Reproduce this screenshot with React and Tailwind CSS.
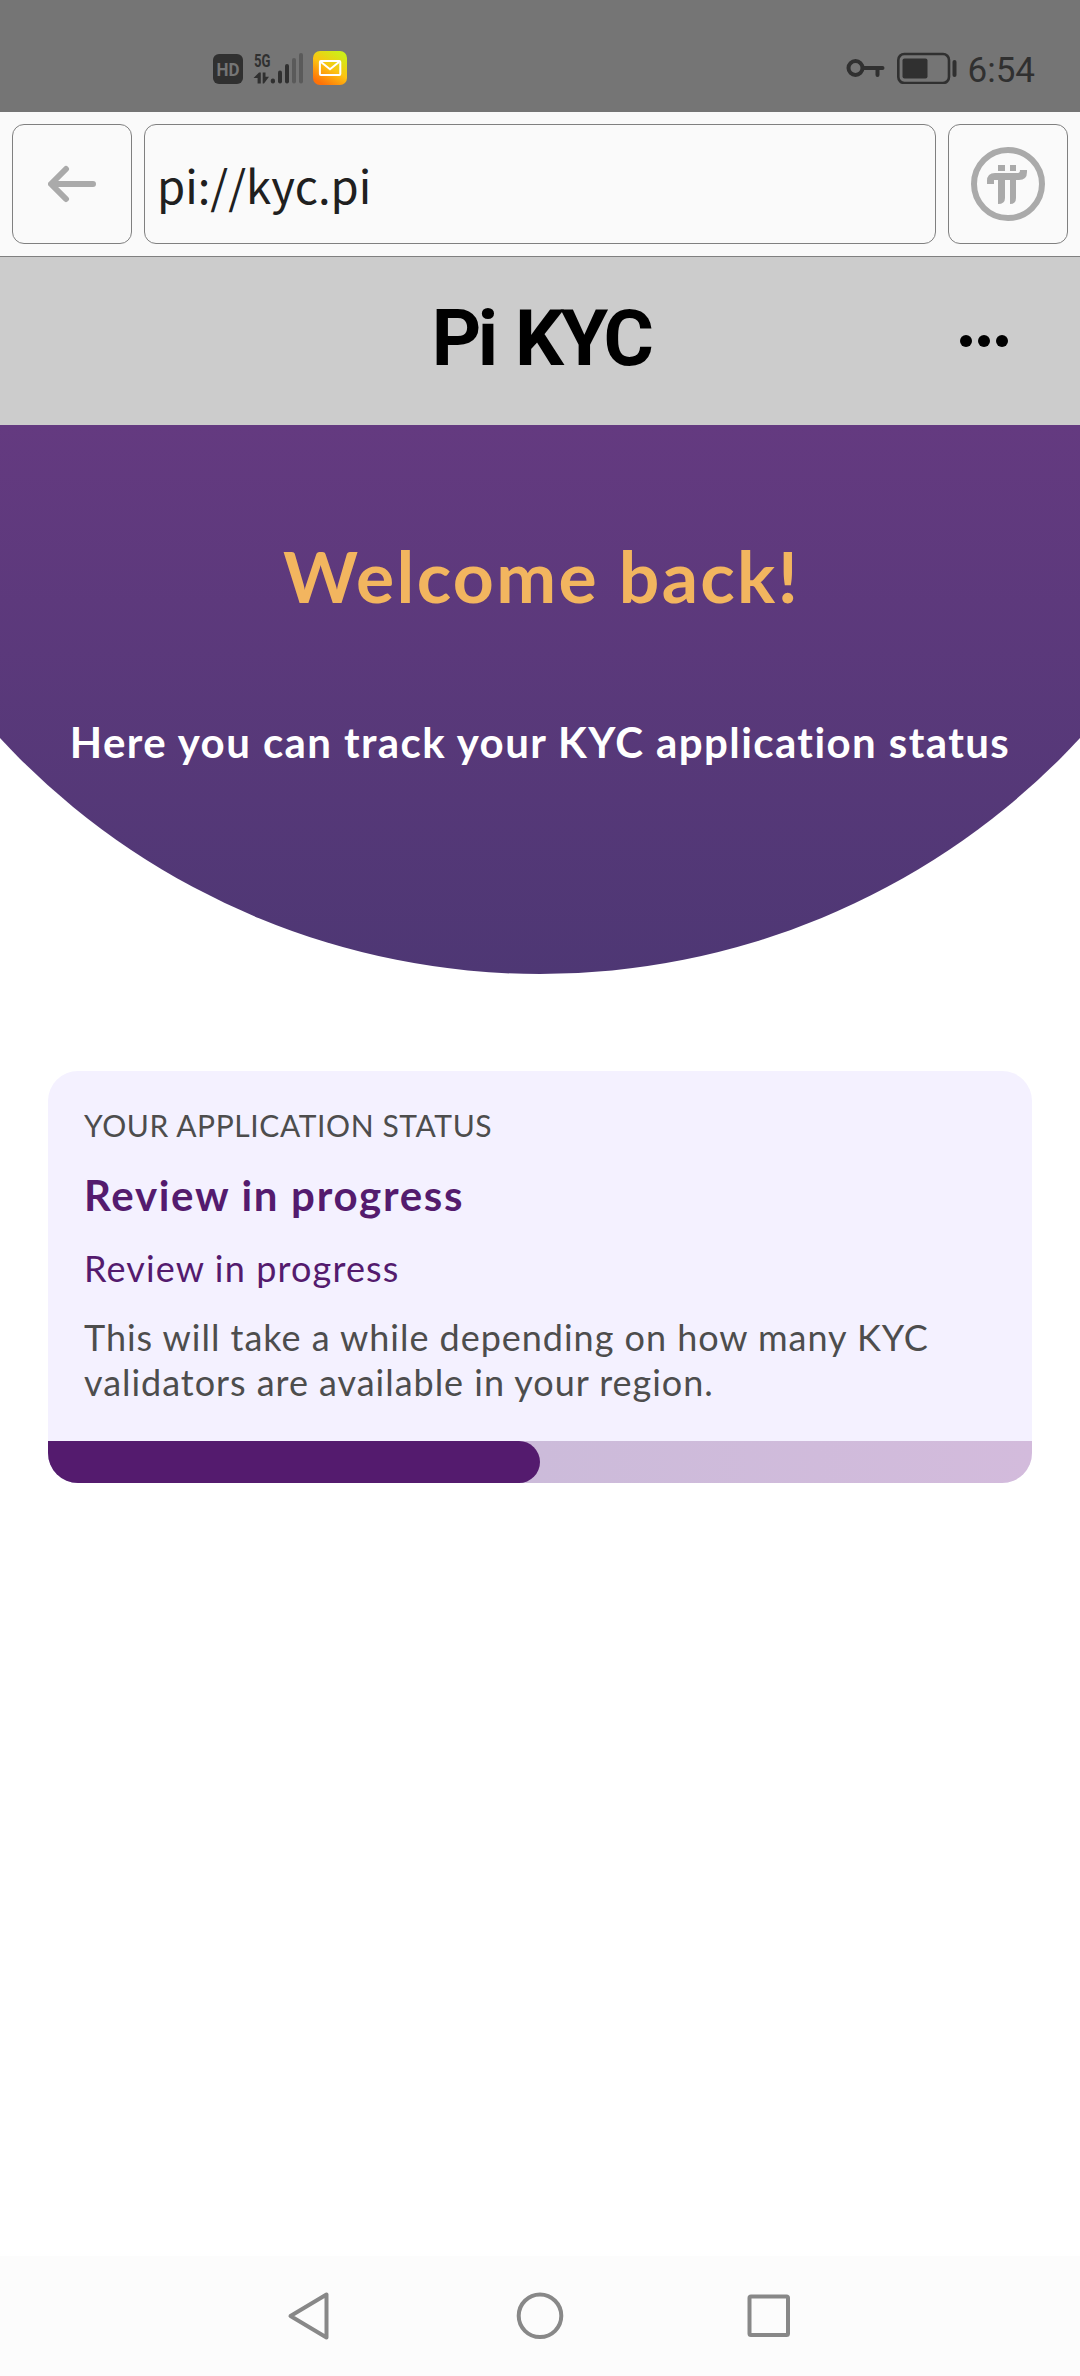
function SignalCluster() {
  return (
    <svg className="h-9 w-[134px]" viewBox="213 50 134 36" fill="#303030">
      <defs>
        <linearGradient id="mail" x1="0.2" y1="1" x2="0.8" y2="0">
          <stop offset="0.05" stopColor="#ff7208" />
          <stop offset="0.5" stopColor="#fcc312" />
          <stop offset="0.95" stopColor="#cdee18" />
        </linearGradient>
      </defs>
      <rect x="213" y="54" width="30" height="30" rx="6" />
      <text x="216.5" y="76" fontFamily="Roboto, sans-serif" fontSize="18.5" fontWeight="700" textLength="23" lengthAdjust="spacingAndGlyphs" fill="#757575">HD</text>
      <text x="254" y="66.5" fontFamily="Roboto, sans-serif" fontSize="19" fontWeight="700" textLength="16.5" lengthAdjust="spacingAndGlyphs">5G</text>
      <path d="M253.5 78 L259 72.5 H260.8 V83.5 H257.6 V78 Z" />
      <path d="M262.7 72.5 H265.5 V76.8 H269 L264 83.5 H262.7 Z" />
      <rect x="270.8" y="78.5" width="4.2" height="5" rx="2" />
      <rect x="278" y="70.5" width="4" height="13" rx="2" />
      <rect x="285" y="64" width="4" height="19.5" rx="2" />
      <rect x="292" y="58" width="4" height="25.5" rx="2" fill="#5a5a5a" />
      <rect x="299" y="53" width="4" height="30.5" rx="2" fill="#5a5a5a" />
      <rect x="313" y="51" width="34" height="34" rx="7" fill="url(#mail)" />
      <rect x="319.9" y="60.9" width="20.4" height="14.2" rx="1" fill="none" stroke="#fff" strokeWidth="2" />
      <path d="M321 62 L330 69.2 L339 62" fill="none" stroke="#fff" strokeWidth="2" />
    </svg>
  );
}

function KeyIcon() {
  return (
    <svg className="h-5 w-10" viewBox="844.5 58 40 20" fill="none" stroke="#303030">
      <circle cx="854" cy="68" r="7" strokeWidth="4" />
      <path d="M862 68 H881 M876 68 V75" strokeWidth="4" strokeLinecap="round" />
    </svg>
  );
}

function BatteryIcon() {
  return (
    <svg className="h-8 w-[60px]" viewBox="895.5 52 60 32" fill="#303030">
      <rect x="896.8" y="54" width="50.7" height="29" rx="6" fill="none" stroke="#303030" strokeWidth="2.6" />
      <rect x="901" y="58.5" width="25" height="20" rx="2" />
      <rect x="951" y="60" width="4" height="17" rx="2" />
    </svg>
  );
}

function ArrowIcon() {
  return (
    <svg className="h-10 w-12" viewBox="48 164 48 40" fill="none" stroke="#aaa" strokeWidth="6" strokeLinecap="round" strokeLinejoin="round">
      <path d="M66 169 L51 184 L66 199 M52 184 H93" />
    </svg>
  );
}

function PiIcon() {
  return (
    <svg className="h-[76px] w-[76px]" viewBox="970 146 76 76" fill="#aaa">
      <circle cx="1008" cy="184" r="34" fill="none" stroke="#aaa" strokeWidth="6" />
      <rect x="998" y="165" width="7" height="6" />
      <rect x="1010" y="165" width="6" height="6" />
      <path d="M987 184 V181 Q987 173 995 173 H1018 Q1020 173 1020 170 H1027 V172 Q1027 180 1019 180 H1016 V198 Q1016 204 1010 204 V180 H1005 V198 Q1005 204 998 204 V180 H994 V184 Z" />
    </svg>
  );
}

function StatusBar() {
  return (
    <div className="flex h-28 items-start justify-between bg-[#757575] pr-[45px] pl-[213px]">
      <div className="pt-[50px]">
        <SignalCluster />
      </div>
      <div className="mt-[52px] flex h-8 items-center gap-[11px]">
        <KeyIcon />
        <BatteryIcon />
        <span className="pt-[5px] font-[Roboto,sans-serif] text-[35px] leading-8 text-[#303030]">6:54</span>
      </div>
    </div>
  );
}

function BrowserBar() {
  return (
    <div className="flex h-[145px] gap-3 border-b border-[#808080] bg-[#fafafa] p-3">
      <button className="flex size-[120px] items-center justify-center rounded-xl border border-[#808080]">
        <ArrowIcon />
      </button>
      <div className="flex h-[120px] flex-1 items-center rounded-xl border border-[#808080] pl-3 font-['Noto_Sans_CJK_SC',sans-serif] text-[45.5px] text-[#202020]">
        pi://kyc.pi
      </div>
      <button className="flex size-[120px] items-center justify-center rounded-xl border border-[#808080]">
        <PiIcon />
      </button>
    </div>
  );
}

function Header() {
  return (
    <header className="grid h-[168px] grid-cols-[1fr_auto_1fr] items-center bg-[#ccc]">
      <h1 className="col-start-2 pb-[3px] pl-[2px] font-[Roboto,sans-serif] text-[77px] leading-none font-bold tracking-[-3.6px] [word-spacing:5px]">Pi KYC</h1>
      <div className="flex gap-[6px] justify-self-end pr-[72px]">
        <i className="size-3 rounded-full bg-black" />
        <i className="size-3 rounded-full bg-black" />
        <i className="size-3 rounded-full bg-black" />
      </div>
    </header>
  );
}

function Hero() {
  return (
    <section className="h-[549px] bg-linear-to-b from-[#643a80] to-[#4e3774] pt-[110px] text-center [clip-path:circle(736px_at_540px_-187px)]">
      <h2 className="pl-[3px] text-[71.5px] leading-[80px] font-bold tracking-[2.35px] text-[#f2b55f]">Welcome back!</h2>
      <p className="mt-[102px] text-[42px] leading-[50px] font-bold tracking-[1.42px] text-white">Here you can track your KYC application status</p>
    </section>
  );
}

function StatusCard() {
  return (
    <section className="mx-12 mt-[97px] overflow-hidden rounded-[30px] bg-[#f4f1ff] text-[#4d4d4d]">
      <div className="px-9 pt-[34px] pb-9">
        <p className="text-[30px] leading-10 tracking-[0.6px]">YOUR APPLICATION STATUS</p>
        <h3 className="mt-[25px] text-[42px] leading-[50px] font-bold tracking-[1.7px] text-[#541b6e]">Review in progress</h3>
        <p className="mt-[26px] text-[36px] leading-[45px] tracking-[1.15px] text-[#541b6e]">Review in progress</p>
        <p className="mt-6 text-[36px] leading-[45px] tracking-[0.97px]">
          This will take a while depending on how many KYC
          <br />
          validators are available in your region.
        </p>
      </div>
      <div className="h-[42px] bg-linear-to-r from-[#c5bbd8] to-[#d3bbdc]">
        <div className="h-full w-1/2 rounded-r-full bg-[#541b6e]" />
      </div>
    </section>
  );
}

function NavBar() {
  return (
    <nav className="mt-auto flex h-[120px] items-center justify-center bg-[#fcfcfc]">
      <svg className="h-[52px] w-[508px]" viewBox="286 2290 508 52" fill="none" stroke="#888" strokeWidth="4" strokeLinejoin="round">
        <path d="M290.5 2316 L326.5 2294.5 V2337.5 Z" />
        <circle cx="540" cy="2315.8" r="21.3" />
        <rect x="749.5" y="2296.5" width="38.5" height="38.5" rx="1.5" />
      </svg>
    </nav>
  );
}

export default function App() {
  return (
    <div className="flex h-[2376px] w-[1080px] flex-col bg-white font-[Lato,sans-serif]">
      <StatusBar />
      <BrowserBar />
      <Header />
      <Hero />
      <StatusCard />
      <NavBar />
    </div>
  );
}
